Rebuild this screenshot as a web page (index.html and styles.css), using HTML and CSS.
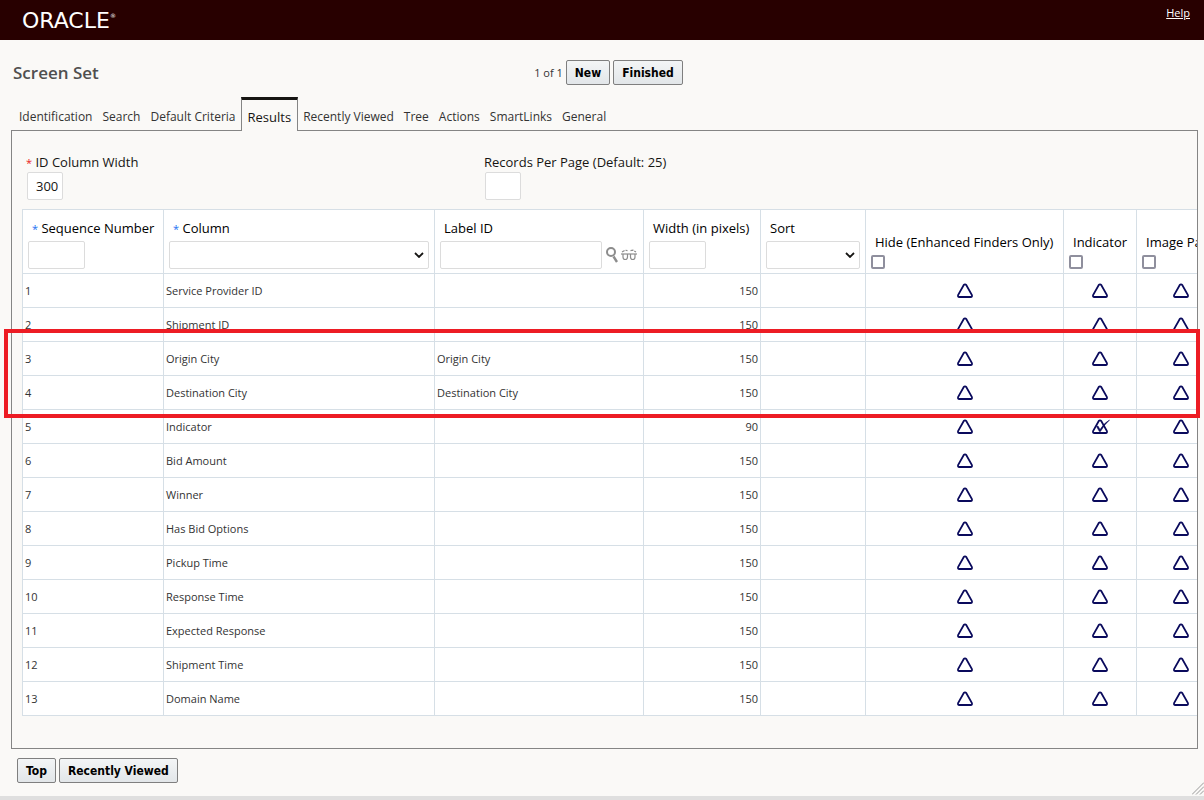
FILE: index.html
```html
<!DOCTYPE html>
<html lang="en">
<head>
    <meta charset="UTF-8">
    <meta name="viewport" content="width=device-width, initial-scale=1.0">
    <title>Screen Set</title>
    <link rel="stylesheet" href="styles.css">
</head>
<body>
    <!-- Shared icons -->
    <svg class="sprite" width="0" height="0" aria-hidden="true">
        <symbol id="off" viewBox="0 0 20 16">
            <path d="M8.6 2.2 Q10 .6 11.4 2.2 L16.8 11.8 Q17.6 14 15.6 14 L4.4 14 Q2.4 14 3.2 11.8 Z" fill="#fff" stroke="#0a0a5c" stroke-width="1.8"/>
        </symbol>
        <symbol id="on" viewBox="0 0 20 16">
            <path d="M8.6 2.2 Q10 .6 11.4 2.2 L16.8 11.8 Q17.6 14 15.6 14 L4.4 14 Q2.4 14 3.2 11.8 Z" fill="#fff" stroke="#0a0a5c" stroke-width="1.8"/>
            <path d="M6.5 7.5 L8 7 L10 10.5 Q14 4 19.5 1 Q14 6 10.4 12.6 L9.4 12.6 Z" fill="#0a0a5c" stroke="#0a0a5c" stroke-width=".5"/>
        </symbol>
    </svg>

    <header class="topbar">
        <div class="logo">ORACLE<sup>®</sup></div>
        <a class="help" href="#">Help</a>
    </header>

    <main>
        <div class="toolbar">
            <h1>Screen Set</h1>
            <div class="paging">
                <span>1 of 1</span>
                <button type="button" class="btn">New</button>
                <button type="button" class="btn">Finished</button>
            </div>
        </div>

        <nav class="tabs">
            <a href="#">Identification</a>
            <a href="#">Search</a>
            <a href="#">Default Criteria</a>
            <a href="#" class="active">Results</a>
            <a href="#">Recently Viewed</a>
            <a href="#">Tree</a>
            <a href="#">Actions</a>
            <a href="#">SmartLinks</a>
            <a href="#">General</a>
        </nav>

        <section class="panel">
            <div class="fields">
                <div class="field">
                    <label for="idWidth"><span class="req">*</span> ID Column Width</label>
                    <input class="box tiny" type="text" id="idWidth" value="300">
                </div>
                <div class="field">
                    <label for="perPage">Records Per Page (Default: 25)</label>
                    <input class="box tiny" type="text" id="perPage">
                </div>
            </div>

            <div class="grid-wrap">
                <table class="grid">
                    <colgroup>
                        <col class="c-seq"><col class="c-column"><col class="c-label"><col class="c-width">
                        <col class="c-sort"><col class="c-hide"><col class="c-ind"><col class="c-img">
                    </colgroup>
                    <thead>
                        <tr>
                            <th><label for="seq"><span class="opt">*</span> Sequence Number</label><input class="box small" type="text" id="seq"></th>
                            <th><label for="column"><span class="opt">*</span> Column</label>
                                <div class="pick"><select class="box" id="column"><option></option></select><svg class="chev" width="10" height="6" viewBox="0 0 10 6"><path d="M1 1 L5 5 L9 1"/></svg></div>
                            </th>
                            <th><label for="labelId">Label ID</label>
                                <div class="lookup">
                                    <input class="box" type="text" id="labelId">
                                    <svg width="14" height="18" viewBox="0 0 14 18"><circle cx="7" cy="6" r="4" fill="none" stroke="#8c8c8c" stroke-width="2"/><path d="M9.5 10.5 L13 16" stroke="#8c8c8c" stroke-width="2.4"/></svg>
                                    <svg width="18" height="14" viewBox="0 0 18 14" fill="none" stroke="#8c8c8c" stroke-width="1.2"><path d="M2 4 L5 2.2 L7.5 2.6 M10.5 2.6 L13 2.2 L16 4" stroke-dasharray="3 1"/><path d="M1 6 H17"/><path d="M3 6 V9 Q3 11.5 5.2 11.5 Q7.5 11.5 7.5 9 V6 M10.5 6 V9 Q10.5 11.5 12.8 11.5 Q15 11.5 15 9 V6"/></svg>
                                </div>
                            </th>
                            <th><label for="width">Width (in pixels)</label><input class="box small" type="text" id="width"></th>
                            <th><label for="sort">Sort</label>
                                <div class="pick"><select class="box" id="sort"><option></option></select><svg class="chev" width="10" height="6" viewBox="0 0 10 6"><path d="M1 1 L5 5 L9 1"/></svg></div>
                            </th>
                            <th><label for="hide">Hide (Enhanced Finders Only)</label><input type="checkbox" id="hide"></th>
                            <th><label for="indicator">Indicator</label><input type="checkbox" id="indicator"></th>
                            <th><label for="image">Image Path</label><input type="checkbox" id="image"></th>
                        </tr>
                    </thead>
                    <tbody>
                        <tr><td>1</td><td>Service Provider ID</td><td></td><td>150</td><td></td><td><svg><use href="#off"/></svg></td><td><svg><use href="#off"/></svg></td><td><svg><use href="#off"/></svg></td></tr>
                        <tr><td>2</td><td>Shipment ID</td><td></td><td>150</td><td></td><td><svg><use href="#off"/></svg></td><td><svg><use href="#off"/></svg></td><td><svg><use href="#off"/></svg></td></tr>
                        <tr><td>3</td><td>Origin City</td><td>Origin City</td><td>150</td><td></td><td><svg><use href="#off"/></svg></td><td><svg><use href="#off"/></svg></td><td><svg><use href="#off"/></svg></td></tr>
                        <tr><td>4</td><td>Destination City</td><td>Destination City</td><td>150</td><td></td><td><svg><use href="#off"/></svg></td><td><svg><use href="#off"/></svg></td><td><svg><use href="#off"/></svg></td></tr>
                        <tr><td>5</td><td>Indicator</td><td></td><td>90</td><td></td><td><svg><use href="#off"/></svg></td><td><svg><use href="#on"/></svg></td><td><svg><use href="#off"/></svg></td></tr>
                        <tr><td>6</td><td>Bid Amount</td><td></td><td>150</td><td></td><td><svg><use href="#off"/></svg></td><td><svg><use href="#off"/></svg></td><td><svg><use href="#off"/></svg></td></tr>
                        <tr><td>7</td><td>Winner</td><td></td><td>150</td><td></td><td><svg><use href="#off"/></svg></td><td><svg><use href="#off"/></svg></td><td><svg><use href="#off"/></svg></td></tr>
                        <tr><td>8</td><td>Has Bid Options</td><td></td><td>150</td><td></td><td><svg><use href="#off"/></svg></td><td><svg><use href="#off"/></svg></td><td><svg><use href="#off"/></svg></td></tr>
                        <tr><td>9</td><td>Pickup Time</td><td></td><td>150</td><td></td><td><svg><use href="#off"/></svg></td><td><svg><use href="#off"/></svg></td><td><svg><use href="#off"/></svg></td></tr>
                        <tr><td>10</td><td>Response Time</td><td></td><td>150</td><td></td><td><svg><use href="#off"/></svg></td><td><svg><use href="#off"/></svg></td><td><svg><use href="#off"/></svg></td></tr>
                        <tr><td>11</td><td>Expected Response</td><td></td><td>150</td><td></td><td><svg><use href="#off"/></svg></td><td><svg><use href="#off"/></svg></td><td><svg><use href="#off"/></svg></td></tr>
                        <tr><td>12</td><td>Shipment Time</td><td></td><td>150</td><td></td><td><svg><use href="#off"/></svg></td><td><svg><use href="#off"/></svg></td><td><svg><use href="#off"/></svg></td></tr>
                        <tr><td>13</td><td>Domain Name</td><td></td><td>150</td><td></td><td><svg><use href="#off"/></svg></td><td><svg><use href="#off"/></svg></td><td><svg><use href="#off"/></svg></td></tr>
                    </tbody>
                </table>
            </div>
            <div class="highlight"></div>
        </section>

        <footer class="actions">
            <button type="button" class="btn">Top</button>
            <button type="button" class="btn">Recently Viewed</button>
            <svg class="grip" width="12" height="13" viewBox="0 0 12 13"><path d="M0 12.5 L12 .5 M4 12.5 L12 4.5 M8 12.5 L12 8.5"/></svg>
        </footer>
    </main>
</body>
</html>
```

FILE: styles.css
```css
* { box-sizing: border-box; }
body { margin: 0; min-height: 100vh; background: #faf9f7; color: #333; font-family: "Open Sans", "Noto Sans", sans-serif; font-size: 12px; overflow: hidden; border-bottom: 4px solid #dfdfdf; }
.sprite { position: absolute; }

/* Header */
.topbar { display: flex; justify-content: space-between; height: 40px; padding: 0 14px 0 22px; background: #280000; color: white; }
.logo { font: 22px/42px "DejaVu Sans", sans-serif; }
.logo sup { font-size: 6px; line-height: 6px; vertical-align: 10px; }
.help { color: white; font-size: 11px; line-height: 26px; }

.toolbar { display: grid; grid-template-columns: 1fr auto 1fr; align-items: center; height: 57px; padding: 8px 0 0 13px; }
h1 { margin: 0; font-size: 17px; line-height: 24px; font-weight: 600; color: #4f4f4f; }
.paging { display: flex; align-items: center; gap: 3px; font-size: 11px; }
.btn { height: 25px; padding: 2px 8px 0; border: 1px solid #7f7f7f; border-radius: 2px; background: linear-gradient(#f3f5f6, #e2e6e9); color: black; font: bold 12px/21px "DejaVu Sans Condensed", "DejaVu Sans", sans-serif; }

/* Tabs */
.tabs { display: flex; height: 34px; padding-left: 14px; }
.tabs a { padding: 3px 5px 0; color: #333; line-height: 34px; text-decoration: none; }
.tabs .active { position: relative; z-index: 1; padding: 0 6px; border: 1px solid #858585; border-top: 3px solid #161513; border-bottom: 0; background: #faf9f7; color: #161513; font-size: 13px; }

.panel { position: relative; margin: -1px 6px 0 11px; padding: 21px 0 32px 10px; border: 1px solid #858585; }
.fields { display: grid; grid-template-columns: 458px 1fr; margin-bottom: 9px; padding-left: 4px; color: #161513; font-size: 13px; }
.field { display: flex; flex-direction: column; align-items: flex-start; line-height: 20px; }
.field .box { margin-left: 1px; }
.req, .opt { font-size: 11px; line-height: 11px; }
.req { color: #e81c1c; }
.opt { color: #1d6ff2; }

.box { height: 28px; padding: 0 0 0 8px; border: 1px solid #dcdcdc; border-radius: 2px; background: white; color: #161513; font: 13px "Open Sans", sans-serif; }
.tiny { width: 36px; }
.small { width: 57px; }

/* Results grid */
.grid-wrap { overflow: hidden; }
.grid { width: 1204px; table-layout: fixed; border-collapse: collapse; background: white; font-size: 11px; }
.c-seq { width: 141px; }
.c-column { width: 271px; }
.c-label { width: 209px; }
.c-width { width: 117px; }
.c-sort { width: 105px; }
.c-hide { width: 198px; }
.c-ind { width: 73px; }
.c-img { width: 89px; }
th, td { border: 1px solid #d6dfe6; }
th { height: 64px; padding: 0 5px 4px; color: black; font-size: 13px; font-weight: normal; text-align: left; vertical-align: bottom; white-space: nowrap; }
th label { display: block; margin-bottom: 3px; padding-left: 4px; line-height: 20px; }
th > .box, th > input { display: block; }
th input[type=checkbox] { appearance: none; width: 14px; height: 14px; margin: 0; border: 2px solid #8f8f9d; border-radius: 2px; background: white; }
td { height: 34px; padding: 0 2px; }
td:nth-child(4) { text-align: right; }
td:nth-child(n+6) { text-align: center; }
td svg { display: block; width: 20px; height: 16px; margin: 0 auto; }

.pick { display: grid; align-items: center; }
.pick select { grid-area: 1 / 1; width: 100%; appearance: none; }
.chev { grid-area: 1 / 1; justify-self: end; margin-right: 5px; fill: none; stroke: #161513; stroke-width: 1.8; pointer-events: none; }
.lookup { display: flex; align-items: center; gap: 2px; }
.lookup .box { flex: 1; min-width: 0; }

/* Callout drawn over rows 3 and 4 */
.highlight { position: absolute; top: 198px; left: -8px; right: -3px; height: 89px; border: 4px solid #ed1c24; pointer-events: none; }

.actions { display: flex; gap: 3px; height: 47px; padding: 9px 0 0 17px; }
.grip { align-self: flex-end; margin: 0 0 1px auto; stroke: #999; fill: none; }
```
